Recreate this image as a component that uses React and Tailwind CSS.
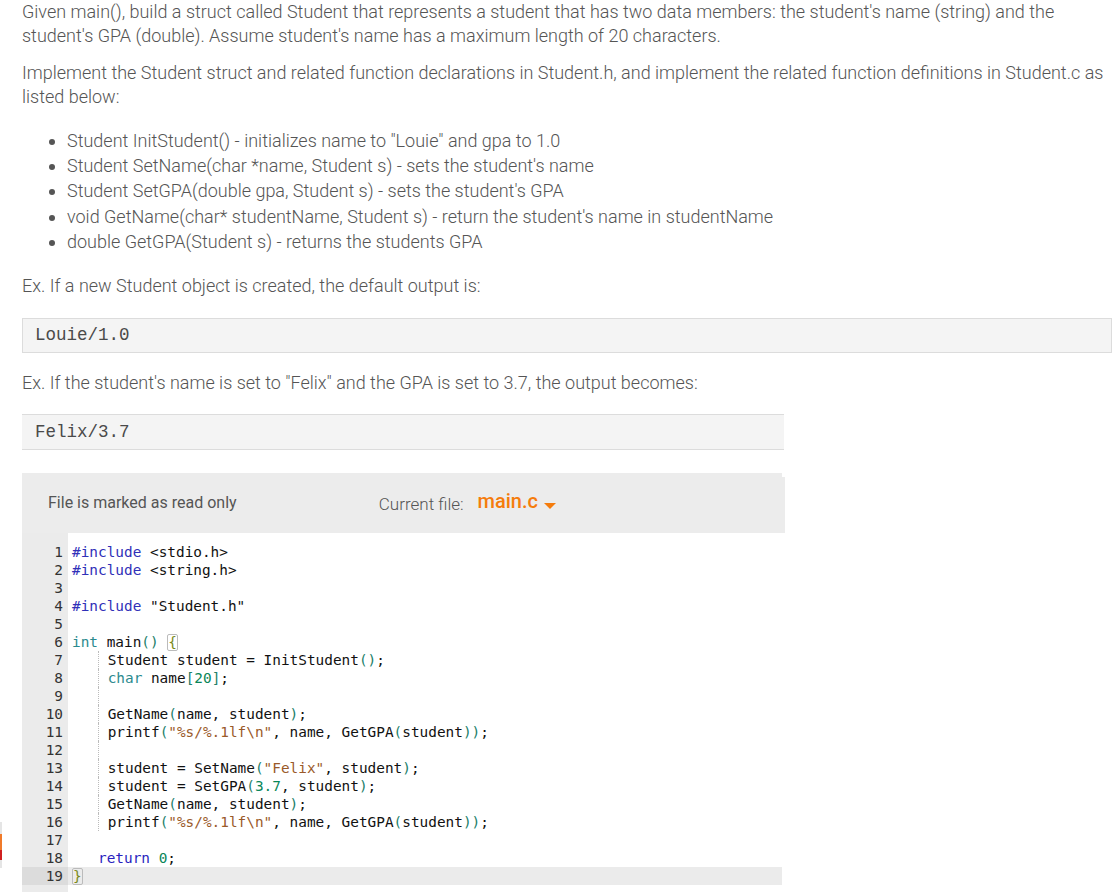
import React from "react";

const C = {
  pp: "text-[#3030b8]",
  ty: "text-[#2b8a8e]",
  br: "text-[#22806a]",
  num: "text-[#098658]",
  str: "text-[#9a5a2a]",
  kw: "text-[#2a1fc0]",
  tx: "text-[#111]",
};

const T = ({ c, children }) => <span className={c}>{children}</span>;

const Guide = ({ children }) => (
  <>
    <span className="inline-block w-[3ch]"></span>
    <span className="inline-block border-l border-dotted border-[#bbb] pl-[1ch] h-[18px]">{children}</span>
  </>
);

const Brace = ({ ch }) => (
  <span className="inline-block border border-[#bbb] rounded-[2px] text-[#7a8a1a] leading-[15px] px-[0px]">{ch}</span>
);

const lines = [
  <><T c={C.pp}>#include</T> &lt;stdio.h&gt;</>,
  <><T c={C.pp}>#include</T> &lt;string.h&gt;</>,
  <></>,
  <><T c={C.pp}>#include</T> "Student.h"</>,
  <></>,
  <><T c={C.ty}>int</T> main<T c={C.br}>()</T> <Brace ch="{" /></>,
  <Guide>Student student = InitStudent<T c={C.br}>()</T>;</Guide>,
  <Guide><T c={C.ty}>char</T> name<T c={C.br}>[</T><T c={C.num}>20</T><T c={C.br}>]</T>;</Guide>,
  <Guide></Guide>,
  <Guide>GetName<T c={C.br}>(</T>name, student<T c={C.br}>)</T>;</Guide>,
  <Guide>printf<T c={C.br}>(</T><T c={C.str}>"%s/%.1lf\n"</T>, name, GetGPA<T c={C.br}>(</T>student<T c={C.br}>))</T>;</Guide>,
  <Guide></Guide>,
  <Guide>student = SetName<T c={C.br}>(</T><T c={C.str}>"Felix"</T>, student<T c={C.br}>)</T>;</Guide>,
  <Guide>student = SetGPA<T c={C.br}>(</T><T c={C.num}>3.7</T>, student<T c={C.br}>)</T>;</Guide>,
  <Guide>GetName<T c={C.br}>(</T>name, student<T c={C.br}>)</T>;</Guide>,
  <Guide>printf<T c={C.br}>(</T><T c={C.str}>"%s/%.1lf\n"</T>, name, GetGPA<T c={C.br}>(</T>student<T c={C.br}>))</T>;</Guide>,
  <></>,
  <>{"   "}<T c={C.kw}>return</T> <T c={C.num}>0</T>;</>,
  <><Brace ch="}" /></>,
];

export default function App() {
  return (
    <div className="relative min-h-[892px] bg-white font-['Roboto',sans-serif] text-[#555] text-[18px] font-light">
      <div className="absolute left-0 top-[822px] w-[2px] h-[46px] flex flex-col">
        <div className="h-[12px] bg-[#e5e5e5]"></div>
        <div className="h-[16px] bg-[#f07a2a]"></div>
        <div className="h-[10px] bg-[#d02020]"></div>
        <div className="h-[8px] bg-[#e5e5e5]"></div>
      </div>
      <div className="pl-[22px] pr-[8px]">
        <p className="leading-[24px] pt-0">
          Given main(), build a struct called Student that represents a student that has two data members: the student's name (string) and the student's GPA (double). Assume student's name has a maximum length of 20 characters.
        </p>
        <p className="leading-[24px] mt-[13px]">
          Implement the Student struct and related function declarations in Student.h, and implement the related function definitions in Student.c as listed below:
        </p>
        <ul className="list-disc pl-[45px] mt-[19px] leading-[25.2px]">
          <li>Student InitStudent() - initializes name to "Louie" and gpa to 1.0</li>
          <li>Student SetName(char *name, Student s) - sets the student's name</li>
          <li>Student SetGPA(double gpa, Student s) - sets the student's GPA</li>
          <li>void GetName(char* studentName, Student s) - return the student's name in studentName</li>
          <li>double GetGPA(Student s) - returns the students GPA</li>
        </ul>
        <p className="leading-[24px] mt-[20px]">Ex. If a new Student object is created, the default output is:</p>
        <div className="mt-[20px] h-[35px] w-[1090px] border border-[#dcdcdc] bg-[#f4f4f4] flex items-center pl-[12px] font-['Liberation_Mono',monospace] font-normal text-[17.5px] text-[#4a4a4a]">
          Louie/1.0
        </div>
        <p className="leading-[24px] mt-[18px]">Ex. If the student's name is set to "Felix" and the GPA is set to 3.7, the output becomes:</p>
        <div className="mt-[19px] h-[36px] w-[762px] border-y border-[#dcdcdc] bg-[#f4f4f4] flex items-center pl-[13px] font-['Liberation_Mono',monospace] font-normal text-[17.5px] text-[#4a4a4a]">
          Felix/3.7
        </div>
        <div className="mt-[23px] w-[764px]">
          <div className="flex items-start">
            <div className="h-[60px] w-[760px] bg-[#ececec] flex items-center justify-between pl-[26px] pr-[226px]">
              <span className="font-normal text-[16px] text-[#555]">File is marked as read only</span>
              <span className="flex items-center">
                <span className="font-light text-[17px] text-[#555] pt-[4px]">Current file:</span>
                <span className="ml-[14px] font-medium text-[20px] text-[#f57c0c] pb-[4px]">main.c</span>
                <svg width="12" height="7" viewBox="0 0 12 7" className="ml-[6px] mt-[6px]"><path d="M0 0 L12 0 L6 6 Z" fill="#f57c0c" /></svg>
              </span>
            </div>
            <div className="w-[3px] mt-[4px] h-[56px] bg-[#ececec]"></div>
          </div>
          <div className="flex font-['DejaVu_Sans_Mono',monospace] font-normal text-[14.4px] leading-[18px] text-[#111] w-[760px] bg-white">
            <div className="w-[46px] bg-[#ebebeb] pt-[10px] text-right pr-[5px] text-[#333]">
              {lines.map((_, i) => (
                <div key={i} className={"h-[18px] " + (i === 18 ? "bg-[#dcdcdc] -mr-[5px] pr-[5px]" : "")}>{i + 1}</div>
              ))}
              <div className="h-[10px]"></div>
            </div>
            <div className="flex-1 pt-[10px]">
              {lines.map((l, i) => (
                <div key={i} className={"h-[18px] pl-[4px] whitespace-pre " + (i === 18 ? "bg-[#ebebeb]" : "")}>{l}</div>
              ))}
            </div>
          </div>
        </div>
      </div>
    </div>
  );
}
